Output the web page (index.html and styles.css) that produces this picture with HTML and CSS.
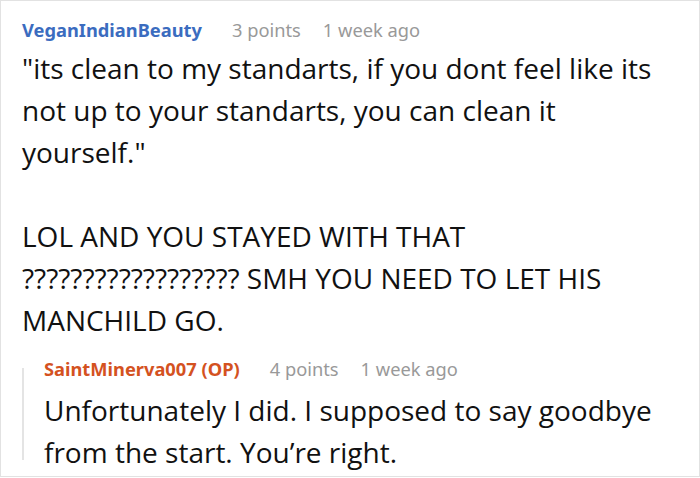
FILE: index.html
```html
<!DOCTYPE html>
<html>
<head>
<meta charset="utf-8">
<link rel="stylesheet" href="styles.css">
</head>
<body>
<div class="page">
  <div class="comment">
    <div class="meta">
      <span class="author author-blue">VeganIndianBeauty</span>
      <span class="points">3 points</span>
      <span class="time">1 week ago</span>
    </div>
    <div class="body">
      <p>"its clean to my standarts, if you dont feel like its not up to your standarts, you can clean it yourself."</p>
      <p>LOL AND YOU STAYED WITH THAT ?????????????????? SMH YOU NEED TO LET HIS MANCHILD GO.</p>
    </div>
    <div class="reply">
      <div class="meta">
        <span class="author author-op">SaintMinerva007 (OP)</span>
        <span class="points">4 points</span>
        <span class="time">1 week ago</span>
      </div>
      <div class="body">
        <p>Unfortunately I did. I supposed to say goodbye from the start. You’re right.</p>
      </div>
    </div>
  </div>
</div>
</body>
</html>
```

FILE: styles.css
```css
html, body {
  margin: 0;
  padding: 0;
  background: #fff;
}
.page {
  box-sizing: border-box;
  width: 700px;
  height: 477px;
  border: 1px solid #e2e2e2;
  padding: 17px 24px 0 21px;
  font-family: "Noto Sans", "Open Sans", sans-serif;
  color: #111;
  overflow: hidden;
}
.meta {
  display: flex;
  align-items: baseline;
  font-size: 18.3px;
  line-height: 24px;
}
.author {
  font-weight: 700;
  margin-right: 30px;
}
.author-blue { color: #3b6cbf; }
.author-op { color: #d4521f; }
.points {
  color: #999;
  margin-right: 22px;
}
.time { color: #999; }
.comment > .body {
  margin-top: 5px;
}
.body p {
  margin: 0 0 42px 0;
  font-family: "Open Sans", "Noto Sans", sans-serif;
  font-size: 28px;
  line-height: 42px;
}
.body p:last-child { margin-bottom: 0; }
.reply {
  position: relative;
  margin-top: 16px;
  padding-left: 22px;
}
.reply::before {
  content: "";
  position: absolute;
  left: 0;
  top: 11px;
  bottom: 13px;
  width: 2px;
  background: #e4e4e4;
}
.reply > .body {
  margin-top: 8px;
}
```
